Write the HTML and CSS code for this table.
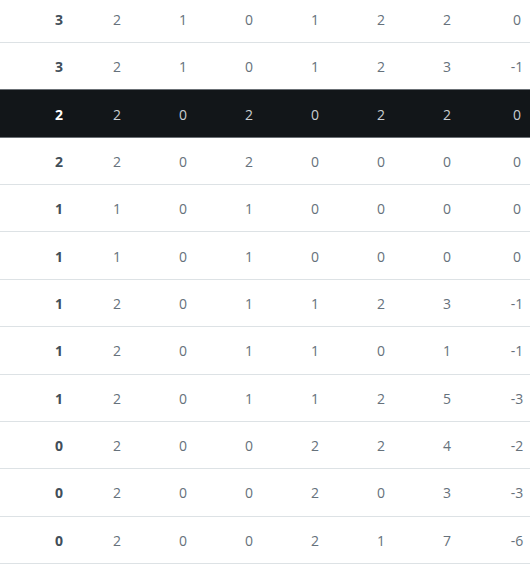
FILE: index.html
```html
<!DOCTYPE html>
<html>
<head>
<meta charset="utf-8">
<link rel="stylesheet" href="styles.css">
</head>
<body>
<div class="table">
  <div class="row"><span class="c pts">3</span><span class="c">2</span><span class="c">1</span><span class="c">0</span><span class="c">1</span><span class="c">2</span><span class="c">2</span><span class="c">0</span></div>
  <div class="row pre-dark"><span class="c pts">3</span><span class="c">2</span><span class="c">1</span><span class="c">0</span><span class="c">1</span><span class="c">2</span><span class="c">3</span><span class="c">-1</span></div>
  <div class="row dark"><span class="c pts">2</span><span class="c">2</span><span class="c">0</span><span class="c">2</span><span class="c">0</span><span class="c">2</span><span class="c">2</span><span class="c">0</span></div>
  <div class="row"><span class="c pts">2</span><span class="c">2</span><span class="c">0</span><span class="c">2</span><span class="c">0</span><span class="c">0</span><span class="c">0</span><span class="c">0</span></div>
  <div class="row"><span class="c pts">1</span><span class="c">1</span><span class="c">0</span><span class="c">1</span><span class="c">0</span><span class="c">0</span><span class="c">0</span><span class="c">0</span></div>
  <div class="row"><span class="c pts">1</span><span class="c">1</span><span class="c">0</span><span class="c">1</span><span class="c">0</span><span class="c">0</span><span class="c">0</span><span class="c">0</span></div>
  <div class="row"><span class="c pts">1</span><span class="c">2</span><span class="c">0</span><span class="c">1</span><span class="c">1</span><span class="c">2</span><span class="c">3</span><span class="c">-1</span></div>
  <div class="row"><span class="c pts">1</span><span class="c">2</span><span class="c">0</span><span class="c">1</span><span class="c">1</span><span class="c">0</span><span class="c">1</span><span class="c">-1</span></div>
  <div class="row"><span class="c pts">1</span><span class="c">2</span><span class="c">0</span><span class="c">1</span><span class="c">1</span><span class="c">2</span><span class="c">5</span><span class="c">-3</span></div>
  <div class="row"><span class="c pts">0</span><span class="c">2</span><span class="c">0</span><span class="c">0</span><span class="c">2</span><span class="c">2</span><span class="c">4</span><span class="c">-2</span></div>
  <div class="row"><span class="c pts">0</span><span class="c">2</span><span class="c">0</span><span class="c">0</span><span class="c">2</span><span class="c">0</span><span class="c">3</span><span class="c">-3</span></div>
  <div class="row"><span class="c pts">0</span><span class="c">2</span><span class="c">0</span><span class="c">0</span><span class="c">2</span><span class="c">1</span><span class="c">7</span><span class="c">-6</span></div>
</div>
</body>
</html>
```

FILE: styles.css
```css
html, body {
  margin: 0;
  padding: 0;
  background: #ffffff;
  overflow: hidden;
}
body {
  font-family: "Open Sans", "DejaVu Sans", sans-serif;
  font-size: 14px;
  color: #66717b;
}
.table {
  margin-top: -4.36px;
  width: 530px;
}
.row {
  display: grid;
  grid-template-columns: 58px 66px 66px 66px 66px 66px 70px 40px;
  padding-left: 39px;
  height: 46.36px;
  align-items: center;
  border-bottom: 1px solid #dde2e5;
  box-sizing: content-box;
}
.c {
  width: 40px;
  text-align: center;
  font-weight: 400;
  line-height: 1;
  padding-top: 2px;
}
.pts {
  font-weight: 700;
  color: #414e59;
}
.pre-dark {
  border-bottom-color: #6b7075;
}
.dark {
  background: #121619;
  border-bottom-color: #6b7075;
  color: #c9ced2;
}
.dark .pts {
  color: #ffffff;
}
```
